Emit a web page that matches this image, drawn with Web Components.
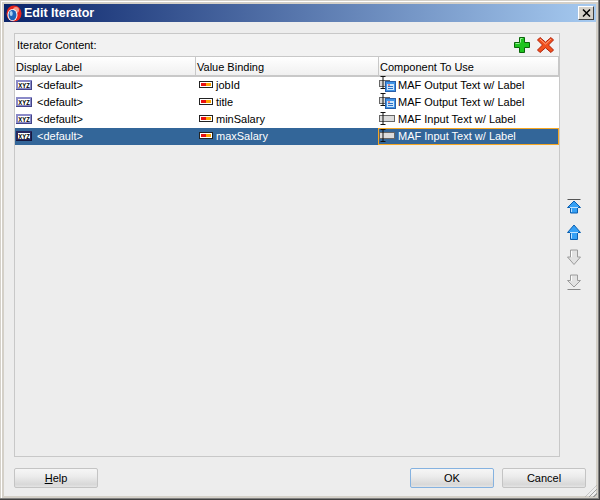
<!DOCTYPE html>
<html>
<head>
<meta charset="utf-8">
<title>Edit Iterator</title>
<style>
    html, body { margin: 0; padding: 0; width: 600px; height: 500px; overflow: hidden; }
    body { font: 11px "Liberation Sans", "Noto Sans", sans-serif; color: #000; }
</style>
</head>
<body>
<edit-iterator-dialog></edit-iterator-dialog>

<script>
const ICONS = {
    label: `<svg width="16" height="10" viewBox="0 0 16 10">
        <rect x="0" y="0" width="16" height="10" fill="var(--label-edge, #8a8ac8)"/>
        <rect x="15" y="1" width="1" height="9" fill="var(--label-shade, #44448a)"/>
        <rect x="0" y="9" width="16" height="1" fill="var(--label-shade, #44448a)"/>
        <rect x="2" y="2" width="12" height="6" fill="#fff"/>
        <text x="8" y="7.6" text-anchor="middle" font-family="Liberation Sans" font-size="6.500" font-weight="700" fill="#000" textLength="11.500" lengthAdjust="spacingAndGlyphs">XYZ</text>
    </svg>`,
    binding: `<svg width="14" height="7" viewBox="0 0 14 7">
        <rect x="0.5" y="0.5" width="13" height="6" fill="#fff" stroke="#222"/>
        <rect x="2" y="2" width="5" height="3" fill="#e81010"/>
        <rect x="7" y="2" width="5" height="3" fill="#ffa500"/>
    </svg>`,
    output: `<svg width="18" height="17" viewBox="0 0 18 17">
        <rect x="0.5" y="4.500" width="10" height="6" fill="#d8d8d8" stroke="#666"/>
        <path d="M1.500 0.500h5M1.500 12.500h5M4 0.500v12" fill="none" stroke="#111" stroke-width="1"/>
        <rect x="6.500" y="5.500" width="10" height="10" fill="#3f93e6" stroke="#2a5fa8"/>
        <rect x="8" y="8" width="7" height="6" fill="#cfe6fb"/>
        <path d="M9 10.500h5M9 12.500h5" stroke="#2a72c8"/>
        <rect x="9" y="8.500" width="2" height="1" fill="#e03030"/>
    </svg>`,
    input: `<svg width="18" height="14" viewBox="0 0 18 14">
        <rect x="0.5" y="3.500" width="15" height="6" fill="#dcdcdc" stroke="#666"/>
        <path d="M1.500 0.500h5M1.500 12.500h5M4 0.500v12" fill="none" stroke="#111"/>
    </svg>`,
    add: `<svg width="16" height="16" viewBox="0 0 16 16">
        <path d="M5.500 0.500h5v5h5v5h-5v5h-5v-5h-5v-5h5z" fill="#1fc41f" stroke="#0a660a"/>
        <path d="M6.500 5.500v-4h2M1.500 6.500h4" fill="none" stroke="#9af29a"/>
    </svg>`,
    remove: `<svg width="17" height="16" viewBox="0 0 17 16">
        <path d="M0.500 3l2.500-2.500 5.500 4.700L14 0.500 16.500 3 11.500 8l5 5-2.500 2.500-5.500-4.700L3 15.500 0.500 13l5-5z" fill="#f2511f" stroke="#b02008"/>
        <path d="M3 2l5.500 5L14 2" fill="none" stroke="#ffa888"/>
    </svg>`,
    first: `<svg width="16" height="17" viewBox="0 0 16 17">
        <path d="M1.500 0.500h13" stroke="#555"/>
        <path d="M8 2l6.500 6.500h-3v5.500h-7V8.500h-3z" fill="#35a0f5" stroke="#0b5fb0"/>
        <path d="M4 8.500h8M5.500 9.500v3.500" stroke="#bfe3ff"/>
    </svg>`,
    up: `<svg width="16" height="17" viewBox="0 0 16 17">
        <path d="M8 1l6.500 7.500h-3v7h-7v-7h-3z" fill="#35a0f5" stroke="#0b5fb0"/>
        <path d="M4 8.500h8M5.500 9.500v5" stroke="#bfe3ff"/>
    </svg>`,
    down: `<svg width="16" height="17" viewBox="0 0 16 17">
        <path d="M4.500 1h7v7h3L8 15.500 1.500 8h3z" fill="#e2e2e2" stroke="#9c9c9c"/>
        <path d="M5.500 2v6" stroke="#fff"/>
    </svg>`,
    last: `<svg width="16" height="17" viewBox="0 0 16 17">
        <path d="M4.500 1h7v5.500h3L8 13 1.500 6.500h3z" fill="#e2e2e2" stroke="#9c9c9c"/>
        <path d="M5.500 2v5" stroke="#fff"/>
        <path d="M1.500 15.500h13" stroke="#888"/>
    </svg>`,
    logo: `<svg width="16" height="17" viewBox="0 0 16 17">
        <ellipse cx="8" cy="8.500" rx="7.500" ry="8" fill="#e8241c"/>
        <circle cx="10" cy="5" r="3" fill="#f59a8a"/>
        <ellipse cx="6.500" cy="10" rx="5" ry="6" fill="#fff"/>
        <ellipse cx="6.500" cy="10" rx="4" ry="5.200" fill="#1f63b8"/>
        <ellipse cx="5.200" cy="8.500" rx="1.500" ry="2.500" fill="#a8d0f2"/>
    </svg>`
};

class TitleBar extends HTMLElement {
    constructor() {
        super();
        this.attachShadow({ mode: 'open' });
        this.shadowRoot.innerHTML = `
            <style>
                :host {
                    display: flex;
                    align-items: center;
                    height: 18px;
                    padding: 0 2px;
                    background: linear-gradient(to right, #0a246a, #a6caf0);
                }
                .logo { display: flex; width: 18px; }
                .title {
                    flex: 1;
                    font: 700 12.500px "Liberation Sans", sans-serif;
                    color: #fff;
                }
                .close {
                    width: 16px;
                    height: 14px;
                    box-sizing: border-box;
                    display: flex;
                    align-items: center;
                    justify-content: center;
                    background: #d4d0c8;
                    border: 1px solid;
                    border-color: #fff #404040 #404040 #fff;
                }
            </style>
            <span class="logo">${ICONS.logo}</span>
            <span class="title"><slot></slot></span>
            <span class="close">
                <svg width="9" height="8" viewBox="0 0 9 8"><path d="M1 0.500l7 7M8 0.500l-7 7" fill="none" stroke="#000" stroke-width="1.500"/></svg>
            </span>
        `;
    }
}

class DialogButton extends HTMLElement {
    constructor() {
        super();
        this.attachShadow({ mode: 'open' });
        this.shadowRoot.innerHTML = `
            <style>
                :host {
                    display: flex;
                    align-items: center;
                    justify-content: center;
                    width: 84px;
                    height: 20px;
                    box-sizing: border-box;
                    border: 1px solid #c4c4c4;
                    border-radius: 2px;
                    background: linear-gradient(to bottom, #f6f6f6 0%, #ececec 40%, #d8d8d8 85%, #e4e4e4 100%);
                }
                :host([default]) { border-color: #85b2e0; }
            </style>
            <slot></slot>
        `;
    }
}

class TableRow extends HTMLElement {
    constructor() {
        super();
        this.attachShadow({ mode: 'open' });
    }

    connectedCallback() {
        const widget = this.getAttribute('widget');
        this.shadowRoot.innerHTML = `
            <style>
                :host {
                    display: grid;
                    grid-template-columns: 181px 183px 1fr;
                    height: 17px;
                    background: #fff;
                    color: #000;
                }
                :host([selected]) {
                    background: #336699;
                    color: #fff;
                    --label-edge: #28285e;
                    --label-shade: #16163c;
                }
                .cell {
                    display: flex;
                    align-items: center;
                    height: 17px;
                    padding-bottom: 2px;
                    box-sizing: border-box;
                    white-space: nowrap;
                }
                .label { padding-left: 1px; gap: 5px; }
                .binding { padding-left: 3px; gap: 3px; }
                .widget span { display: flex; width: 19px; }
                :host([selected]) .widget {
                    margin-left: -1px;
                    padding-left: 1px;
                    outline: 1px solid #f5a623;
                    outline-offset: -1px;
                }
            </style>
            <div class="cell label">${ICONS.label}<span>&lt;default&gt;</span></div>
            <div class="cell binding">${ICONS.binding}<span>${this.getAttribute('binding')}</span></div>
            <div class="cell widget"><span>${ICONS[widget === 'Input' ? 'input' : 'output']}</span>MAF ${widget} Text w/ Label</div>
        `;
    }
}

class IteratorTable extends HTMLElement {
    constructor() {
        super();
        this.attachShadow({ mode: 'open' });
        this.shadowRoot.innerHTML = `
            <style>
                :host {
                    display: flex;
                    flex-direction: column;
                    flex: 1;
                    border: 1px solid #c8c8c8;
                    box-sizing: border-box;
                }
                .caption {
                    display: flex;
                    align-items: center;
                    justify-content: space-between;
                    height: 22px;
                    padding: 0 5px 0 2px;
                    background: #f2f2f2;
                }
                .tools { display: flex; gap: 7px; align-items: center; }
                .tools span { display: flex; }
                .head {
                    display: grid;
                    grid-template-columns: 181px 183px 1fr;
                    height: 21px;
                    box-sizing: border-box;
                    background: linear-gradient(to bottom, #fff, #f0f0f0);
                    border-top: 1px solid #c8c8c8;
                    border-bottom: 2px solid #c8c8c8;
                }
                .head div {
                    display: flex;
                    align-items: center;
                    padding: 2px 0 0 1px;
                    border-right: 1px solid #c8c8c8;
                }
            </style>
            <div class="caption">
                <span>Iterator Content:</span>
                <span class="tools"><span>${ICONS.add}</span><span>${ICONS.remove}</span></span>
            </div>
            <div class="head">
                <div>Display Label</div>
                <div>Value Binding</div>
                <div>Component To Use</div>
            </div>
            <slot></slot>
        `;
    }
}

class MoveButtons extends HTMLElement {
    constructor() {
        super();
        this.attachShadow({ mode: 'open' });
        this.shadowRoot.innerHTML = `
            <style>
                :host {
                    display: flex;
                    flex-direction: column;
                    justify-content: center;
                    align-items: center;
                    gap: 8px;
                    width: 26px;
                    padding-left: 2px;
                    box-sizing: border-box;
                }
                span { display: flex; }
            </style>
            <span>${ICONS.first}</span>
            <span>${ICONS.up}</span>
            <span>${ICONS.down}</span>
            <span>${ICONS.last}</span>
        `;
    }
}

class EditIteratorDialog extends HTMLElement {
    constructor() {
        super();
        this.attachShadow({ mode: 'open' });
        this.shadowRoot.innerHTML = `
            <style>
                :host {
                    display: flex;
                    flex-direction: column;
                    width: 600px;
                    height: 500px;
                    box-sizing: border-box;
                    padding: 4px;
                    background: #d4d0c8;
                    box-shadow: inset -1px -1px 0 #404040, inset -2px -2px 0 #808080, inset 1px 1px 0 #d4d0c8, inset 2px 2px 0 #fff;
                    position: relative;
                }
                .body {
                    flex: 1;
                    display: flex;
                    flex-direction: column;
                    background: #ededed;
                    padding: 11px 10px 8px 10px;
                }
                .main { flex: 1; display: flex; }
                .buttons {
                    display: flex;
                    align-items: center;
                    gap: 8px;
                    margin-top: 11px;
                }
                .spacer { flex: 1; }
                u { text-underline-offset: 1px; }
                .grip {
                    position: absolute;
                    right: 3px;
                    bottom: 3px;
                    width: 12px;
                    height: 12px;
                    background: repeating-linear-gradient(135deg, transparent 0 2px, #a0a0a0 2px 3px);
                    clip-path: polygon(100% 0, 100% 100%, 0 100%);
                }
            </style>
            <title-bar>Edit Iterator</title-bar>
            <div class="body">
                <div class="main">
                    <iterator-table>
                        <table-row binding="jobId" widget="Output"></table-row>
                        <table-row binding="title" widget="Output"></table-row>
                        <table-row binding="minSalary" widget="Input"></table-row>
                        <table-row binding="maxSalary" widget="Input" selected></table-row>
                    </iterator-table>
                    <move-buttons></move-buttons>
                </div>
                <div class="buttons">
                    <dialog-button><span><u>H</u>elp</span></dialog-button>
                    <span class="spacer"></span>
                    <dialog-button default>OK</dialog-button>
                    <dialog-button>Cancel</dialog-button>
                </div>
            </div>
            <span class="grip"></span>
        `;
    }
}

customElements.define('title-bar', TitleBar);
customElements.define('dialog-button', DialogButton);
customElements.define('table-row', TableRow);
customElements.define('iterator-table', IteratorTable);
customElements.define('move-buttons', MoveButtons);
customElements.define('edit-iterator-dialog', EditIteratorDialog);
</script>
</body>
</html>
